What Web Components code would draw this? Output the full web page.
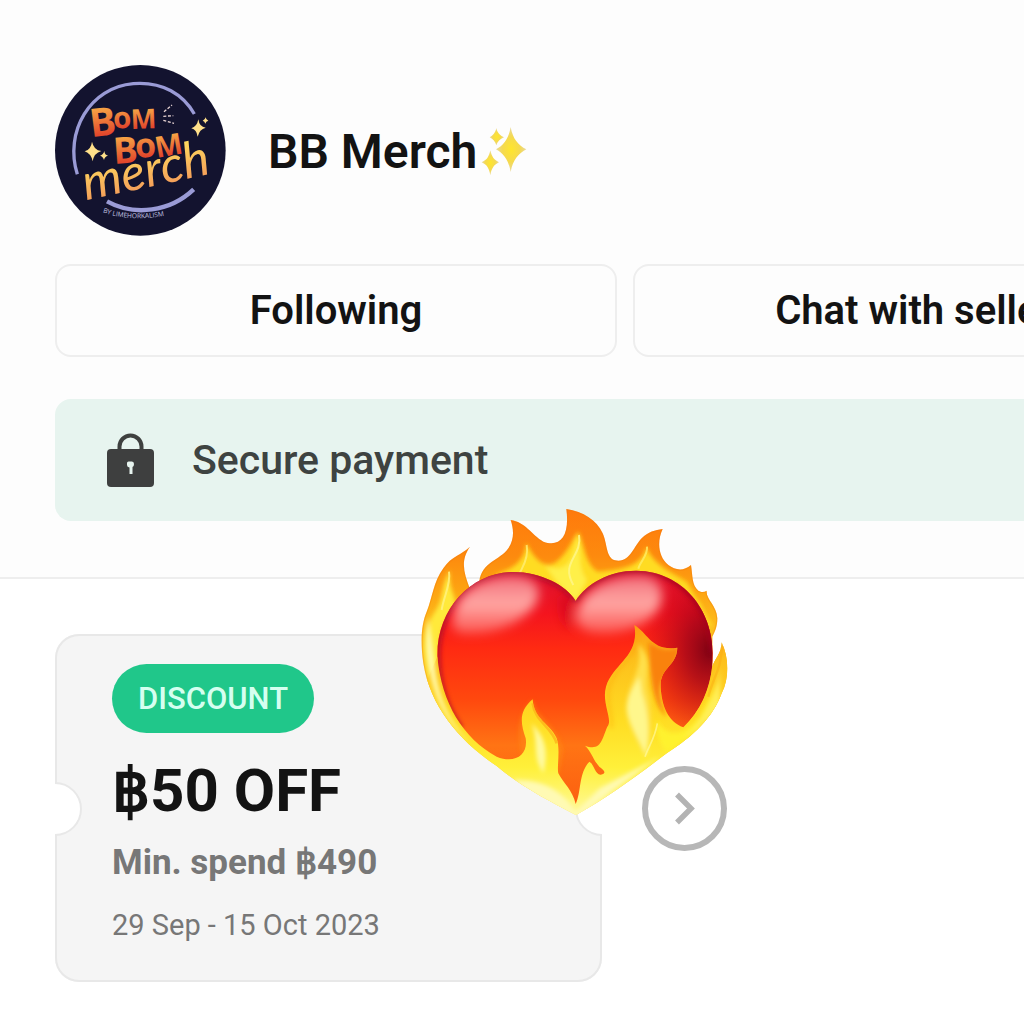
<!DOCTYPE html>
<html lang="en">
<head>
<meta charset="utf-8">
<meta name="viewport" content="width=device-width, initial-scale=1">
<title>BB Merch</title>
<style>
  body { margin: 0; background: #fff; font-family: Roboto, "Noto Sans", "Liberation Sans", sans-serif; color: #131313; }
</style>
</head>
<body>
<shop-page>
  <shop-header slot="header">BB Merch</shop-header>
  <shop-actions slot="header">
    <shop-button>Following</shop-button>
    <shop-button>Chat with seller</shop-button>
  </shop-actions>
  <secure-banner slot="header">Secure payment</secure-banner>
  <voucher-card>
    <span slot="tag">DISCOUNT</span>
    <span slot="title">฿50 OFF</span>
    <span slot="terms">Min. spend ฿490</span>
    <span slot="dates">29 Sep - 15 Oct 2023</span>
  </voucher-card>
  <next-button></next-button>
  <heart-sticker slot="sticker"></heart-sticker>
</shop-page>

<script>
function define(name, html) {
  const template = document.createElement('template');
  template.innerHTML = html;
  customElements.define(name, class extends HTMLElement {
    constructor() {
      super();
      this.attachShadow({ mode: 'open' }).append(template.content.cloneNode(true));
    }
  });
}

define('shop-page', `
<style>
  :host { display: block; position: relative; overflow: hidden; min-height: 100vh; }
  header { display: flex; flex-direction: column; padding: 65px 0 56px 55px; background: #fdfdfd; border-bottom: 2px solid #eee; }
  main { display: flex; align-items: center; gap: 40px; padding: 55px 0 42px 55px; }
</style>
<header><slot name="header"></slot></header>
<main><slot></slot></main>
<slot name="sticker"></slot>`);

define('shop-avatar', `
<style>
  :host { display: block; width: 171px; height: 171px; flex: none; }
  svg { display: block; width: 100%; height: 100%; }
  text { font-family: "Open Sans", Roboto, sans-serif; font-weight: 700; }
</style>
<svg viewBox="45 45 513 513" role="img" aria-label="Bom Bom Merch">
  <defs>
    <linearGradient id="b" x1="0" y1="0" x2="0" y2="1"><stop offset=".25" stop-color="#f6a545"/><stop offset=".75" stop-color="#e2482c"/></linearGradient>
    <linearGradient id="m" x1="0" y1="0" x2="0" y2="1"><stop offset=".1" stop-color="#ffe45e"/><stop offset=".8" stop-color="#f5a25a"/></linearGradient>
    <path id="curve" d="M188 487 Q275 518 385 495"/>
  </defs>
  <circle cx="301" cy="301" r="256" fill="#13132f"/>
  <g fill="none" stroke="#9a9bd6" stroke-width="10">
    <path d="M112 373 C72 245 150 112 280 101 C370 94 430 135 463 192"/>
    <path d="M201 454 C285 500 390 485 461 418" stroke-width="13"/>
  </g>
  <g fill="url(#b)">
    <text transform="translate(154 262) rotate(-7)" font-size="118">B</text>
    <text transform="translate(221 236) rotate(-4)" font-size="88">o</text>
    <text transform="translate(273 237) rotate(-2)" font-size="82">M</text>
    <text transform="translate(222 342) rotate(-4)" font-size="110">B</text>
    <text transform="translate(287 324) rotate(-4)" font-size="102">o</text>
    <text transform="translate(350 324) rotate(-10)" font-size="88">M</text>
  </g>
  <text transform="translate(138 451) rotate(-12)" font-size="150" fill="url(#m)" stroke="#13132f" stroke-width="4" paint-order="stroke" style="font-family:Lato,sans-serif;font-weight:400;font-style:italic">merch</text>
  <g fill="#ffe08a">
    <path d="M156 275 Q161 300 184 303 Q162 309 158 334 Q153 310 134 304 Q153 299 156 275Z"/>
    <path d="M193 303 Q194 315 204 317 Q194 319 192 330 Q189 319 180 317 Q190 314 193 303Z"/>
    <path d="M475 208 Q478 231 497 233 Q478 238 473 260 Q470 239 454 235 Q471 230 475 208Z"/>
    <path d="M497 202 Q498 210 505 212 Q498 214 496 221 Q494 214 488 212 Q495 210 497 202Z"/>
  </g>
  <g stroke="#e8d4d4" stroke-width="4" stroke-dasharray="9 5"><path d="M372 185 L396 165M370 199 L400 197M370 211 L402 220"/></g>
  <text font-size="20" fill="#c4c4e2" style="font-weight:500"><textPath href="#curve">BY LIMEHORKALISM</textPath></text>
</svg>`);

define('shop-header', `
<style>
  :host { display: flex; align-items: center; gap: 42px; }
  .name { display: flex; align-items: center; gap: 4px; }
  h1 { margin: 0; padding-top: 2px; font-size: 48px; line-height: 56px; font-weight: 600; white-space: nowrap; }
  svg { display: block; width: 46px; height: 50px; }
</style>
<shop-avatar></shop-avatar>
<div class="name">
  <h1><slot></slot></h1>
  <svg viewBox="694 52 138 150" aria-hidden="true">
    <defs><radialGradient id="s"><stop offset="0" stop-color="#ffe62b"/><stop offset=".55" stop-color="#f5da4e"/><stop offset="1" stop-color="#e8d89c"/></radialGradient></defs>
    <g fill="url(#s)">
      <path d="M783 55 C789 90 806 110 830 122 C806 135 789 155 783 190 C777 155 762 135 739 122 C762 110 777 90 783 55Z"/>
      <path d="M740 58 C743 73 751 80 763 86 C751 92 743 99 740 110 C737 99 730 92 720 86 C730 80 737 73 740 58Z"/>
      <path d="M722 125 C726 145 734 154 748 161 C734 168 726 177 722 200 C718 177 711 168 696 161 C711 154 718 145 722 125Z"/>
    </g>
  </svg>
</div>`);

define('shop-actions', `
<style>
  :host { display: grid; grid-auto-flow: column; grid-auto-columns: 58%; gap: 16px; margin-top: 28px; }
</style>
<slot></slot>`);

define('shop-button', `
<style>
  :host { display: block; }
  button { display: block; box-sizing: border-box; width: 100%; height: 93px; padding: 0 16px; border: 2px solid #eee; border-radius: 16px; background: #fdfdfd; color: inherit; font: 600 40px/48px Roboto, sans-serif; white-space: nowrap; cursor: pointer; }
</style>
<button type="button"><slot></slot></button>`);

define('secure-banner', `
<style>
  :host { display: flex; align-items: center; gap: 38px; margin-top: 42px; padding: 33px 52px; border-radius: 16px 0 0 16px; background: #e7f4ef; color: #3e4341; font-size: 41px; line-height: 56px; font-weight: 500; }
  svg { display: block; width: 47px; height: 56px; flex: none; }
  p { margin: 0; }
</style>
<svg viewBox="0 0 47 56" aria-hidden="true">
  <path d="M12.500 20V14.500a11 11 0 0 1 22 0V20" fill="none" stroke="#3e403f" stroke-width="4"/>
  <rect y="17" width="47" height="38" rx="4" fill="#3e3f3f"/>
  <path d="M20 31 Q20 29.500 21.500 29.500H25Q27 29.500 27 32Q27 34.500 25.500 35V42H22.500V35.500Q20 35 20 33Z" fill="#e7f4ef"/>
</svg>
<p><slot></slot></p>`);

define('voucher-card', `
<style>
  :host { display: block; flex: none; width: 547px; }
  article { position: relative; overflow: hidden; box-sizing: border-box; padding: 30px 57px 37px; border-radius: 24px; background: #f5f5f5; box-shadow: inset 0 0 0 2px #e8e8e8; }
  article::before, article::after { content: ""; position: absolute; top: 50%; width: 50px; height: 50px; margin-top: -26px; border: 2px solid #e8e8e8; border-radius: 50%; background: #fff; box-sizing: content-box; }
  article::before { left: -27px; }
  article::after { right: -27px; }
  .tag { display: flex; align-items: center; justify-content: center; width: 202px; height: 69px; border-radius: 35px; background: #20c78a; color: #d5fff0; font-size: 31px; line-height: 40px; font-weight: 500; }
  h2, p { margin: 0; white-space: nowrap; }
  h2 { margin-top: 22px; font-size: 60px; line-height: 72px; font-weight: 700; }
  p { color: #777; line-height: 40px; }
  .terms { margin-top: 16px; font-size: 35px; font-weight: 700; }
  .dates { margin-top: 22px; font-size: 29px; }
</style>
<article>
  <div class="tag"><slot name="tag"></slot></div>
  <h2><slot name="title"></slot></h2>
  <p class="terms"><slot name="terms"></slot></p>
  <p class="dates"><slot name="dates"></slot></p>
</article>`);

define('next-button', `
<style>
  :host { display: block; flex: none; }
  button { display: block; width: 85px; height: 85px; padding: 0; border: 6px solid #b7b7b7; border-radius: 50%; background: #fff; cursor: pointer; }
  svg { display: block; width: 73px; height: 73px; }
</style>
<button type="button" aria-label="Next voucher">
  <svg viewBox="0 0 73 73" aria-hidden="true"><path d="M29 22.500 43 36.500 29 50.500" fill="none" stroke="#b3b3b3" stroke-width="5.500"/></svg>
</button>`);

define('heart-sticker', `
<style>
  :host { display: block; position: absolute; left: 400px; top: 490px; width: 350px; height: 350px; pointer-events: none; }
  svg { display: block; width: 100%; height: 100%; }
</style>
<svg viewBox="0 0 1050 1050" role="img" aria-label="Heart on fire">
  <defs>
    <linearGradient id="flame" gradientUnits="userSpaceOnUse" x1="0" y1="60" x2="0" y2="975">
      <stop offset="0" stop-color="#ff7a0c"/><stop offset=".15" stop-color="#fd8a0e"/><stop offset=".27" stop-color="#fda512"/><stop offset=".45" stop-color="#fccb22"/><stop offset=".7" stop-color="#ffe62e"/><stop offset="1" stop-color="#fff78c"/>
    </linearGradient>
    <linearGradient id="heart" gradientUnits="userSpaceOnUse" x1="0" y1="245" x2="0" y2="940">
      <stop offset="0" stop-color="#dc1230"/><stop offset=".18" stop-color="#f4141e"/><stop offset=".33" stop-color="#ff2a12"/><stop offset=".55" stop-color="#ff480e"/><stop offset=".75" stop-color="#ff7414"/><stop offset="1" stop-color="#fc6010"/>
    </linearGradient>
    <linearGradient id="front" gradientUnits="userSpaceOnUse" x1="0" y1="405" x2="0" y2="975">
      <stop offset="0" stop-color="#fd9a12"/><stop offset=".18" stop-color="#fdc01c"/><stop offset=".5" stop-color="#ffdc22"/><stop offset=".75" stop-color="#fff03a"/><stop offset="1" stop-color="#fffa9c"/>
    </linearGradient>
    <radialGradient id="dark">
      <stop offset="0" stop-color="#780014" stop-opacity=".95"/><stop offset=".35" stop-color="#98001a" stop-opacity=".7"/><stop offset="1" stop-color="#c80018" stop-opacity="0"/>
    </radialGradient>
    <linearGradient id="shine" x1="0" y1="0" x2="0" y2="1"><stop offset="0" stop-color="#f47a84" stop-opacity=".9"/><stop offset=".5" stop-color="#ffa8a4"/><stop offset="1" stop-color="#ff8078" stop-opacity=".6"/></linearGradient>
    <filter id="b6" x="-30%" y="-30%" width="160%" height="160%"><feGaussianBlur stdDeviation="6"/></filter>
    <filter id="b16" x="-30%" y="-30%" width="160%" height="160%"><feGaussianBlur stdDeviation="16"/></filter>
    <path id="hp" d="M527 333 C560 280 630 241 710 242 C850 245 938 360 938 490 C938 600 900 660 850 715 C760 800 640 880 528 958 C430 890 330 830 250 780 C165 720 112 620 112 495 C112 350 220 246 340 246 C420 246 500 285 527 333Z"/>
    <path id="op" d="M528 975 C440 930 350 880 290 828 C180 755 90 650 70 520 C60 450 65 400 80 365 C97 325 100 275 130 235 C155 197 185 195 210 170 C178 215 195 255 208 292 L238 275 C245 215 300 212 325 175 C345 145 340 115 332 90 C375 95 395 135 430 155 C480 173 510 140 499 57 C550 65 590 90 608 130 C622 160 618 205 645 211 C690 220 700 170 725 145 C745 125 765 120 788 117 C770 155 775 200 805 225 C825 240 850 245 873 225 C878 255 875 285 895 302 C905 308 912 307 920 302 C918 330 950 345 952 385 C952 410 945 425 937 440 L937 530 C945 505 962 495 965 457 C985 500 990 560 965 610 C940 680 880 740 800 790 C720 850 620 925 528 975Z"/>
    <path id="fp" d="M112 500 C125 640 190 745 290 800 C345 822 385 795 377 745 C362 700 355 665 398 628 C402 690 450 700 470 745 C482 780 470 830 475 850 C490 880 518 900 527 942 C545 905 535 850 568 815 C582 822 586 855 602 854 C622 850 612 840 598 830 C578 808 575 785 555 767 C605 785 606 745 622 710 C640 690 604 640 618 590 C640 520 720 500 703 405 C745 430 755 485 832 473 C830 530 780 530 782 590 C785 650 805 695 850 712 C900 665 930 600 938 520 L1000 420 L1010 700 L528 1000 L50 750 L60 620Z"/>
    <clipPath id="oc"><use href="#op"/></clipPath>
    <clipPath id="hc"><use href="#hp"/></clipPath>
    <clipPath id="fc"><use href="#fp"/></clipPath>
  </defs>
  <use href="#op" fill="url(#flame)"/>
  <g clip-path="url(#oc)">
    <g filter="url(#b6)">
      <path d="M280 255 C330 240 375 220 378 158 C405 210 435 240 470 215 C510 180 515 150 535 125 C555 170 555 220 592 245 C660 240 730 230 738 170 C765 230 820 250 860 275 L940 410 L900 400 L830 280 L527 340 L430 270Z" fill="#ffdc20"/>
      <path d="M435 225 C500 260 530 200 530 130 C545 180 530 230 560 270 L527 335 L470 275Z" fill="#fff04a"/>
      <path d="M95 560 C60 470 80 400 105 365 C135 320 120 290 150 240 C145 300 165 310 168 350 C120 400 110 460 120 560Z" fill="#ffe93a"/>
      <path d="M893 315 C905 360 930 380 928 430 L905 360Z" fill="#ffd92a"/>
    </g>
    <path d="M380 165 C388 205 365 235 360 248" fill="none" stroke="#ffee75" stroke-width="6" opacity=".8"/>
    <path d="M537 135 C548 200 480 215 520 285" fill="none" stroke="#fff68c" stroke-width="6" opacity=".8"/>
    <path d="M741 170 C745 195 720 215 715 236" fill="none" stroke="#ffee65" stroke-width="6" opacity=".8"/>
    <path d="M147 245 C153 285 132 315 125 360" fill="none" stroke="#fff284" stroke-width="6" opacity=".8"/>
    <use href="#op" fill="none" stroke="#f2780a" stroke-width="7" stroke-opacity=".3"/>
  </g>
  <use href="#hp" fill="url(#heart)"/>
  <g clip-path="url(#hc)">
    <ellipse cx="930" cy="480" rx="210" ry="280" fill="url(#dark)"/>
    <path d="M527 333 C500 285 420 246 340 246 C220 246 112 350 112 495 C112 590 140 660 180 715" fill="none" stroke="#b00b2a" stroke-width="22" opacity=".75" filter="url(#b6)"/>
    <path d="M527 333 C560 280 630 241 710 242 C850 245 938 360 938 490" fill="none" stroke="#a3001e" stroke-width="20" opacity=".7" filter="url(#b6)"/>
    <g filter="url(#b16)">
      <path d="M500 300 Q535 350 505 420 Q480 390 480 330Z" fill="#c80a20" opacity=".6"/>
      <path d="M158 400 C160 310 240 258 340 258 C420 260 430 310 400 350 C350 410 260 440 180 428 C165 424 158 415 158 400Z" fill="url(#shine)"/>
      <path d="M528 380 C545 290 640 255 730 258 C790 264 800 325 765 370 C725 415 640 440 570 425 C540 415 528 400 528 380Z" fill="url(#shine)"/>
    </g>
    <path d="M365 800 C345 700 365 660 398 628 C410 690 470 700 490 780 L475 860Z" fill="#ff8a12" opacity=".55" filter="url(#b6)"/>
  </g>
  <g clip-path="url(#oc)">
    <use href="#fp" fill="url(#front)"/>
    <g filter="url(#b6)">
      <path d="M85 380 C72 460 82 520 92 560 C110 640 150 710 215 765 C150 700 112 620 104 520 C98 470 92 430 85 380Z" fill="#fff9a8"/>
    </g>
    <g clip-path="url(#fc)">
      <path d="M745 455 C800 490 820 475 840 468 L820 550 C780 560 765 600 800 680 C760 650 750 560 745 455Z" fill="#f98210" filter="url(#b6)"/>
      <g filter="url(#b6)">
        <path d="M712 460 C735 530 690 570 682 630 C672 700 710 740 735 800 C760 740 755 650 742 600 C735 540 760 510 712 460Z" fill="#ffe04c"/>
        <path d="M718 560 C690 610 668 640 688 690 C702 730 722 760 738 800 C752 720 740 650 725 610Z" fill="#fff78c"/>
        <path d="M395 700 C430 740 448 770 430 850 C395 800 418 760 395 700Z" fill="#fffaa0"/>
        <path d="M770 690 C800 740 840 750 900 680 L950 580 L900 720 L800 790 C780 760 770 740 770 690Z" fill="#fff22e"/>
        <path d="M340 870 C400 870 450 880 500 930 L528 965 L600 895 L780 800 L640 900 L528 985 L380 910Z" fill="#fffab4"/>
        <path d="M960 500 C965 590 920 680 840 760 L960 660Z" fill="#ffef58"/>
      </g>
      <path d="M700 412 C735 500 640 520 626 600 C620 650 640 680 634 715" fill="none" stroke="#fd9d10" stroke-width="8" opacity=".4" filter="url(#b6)"/>
      <path d="M398 640 C405 695 455 710 470 760" fill="none" stroke="#fcae18" stroke-width="8" opacity=".7"/>
      <path d="M735 800 C745 770 765 745 772 700" fill="none" stroke="#fffcae" stroke-width="5" opacity=".6"/>
      <path d="M965 465 C968 530 940 560 925 620" fill="none" stroke="#fba812" stroke-width="7" opacity=".4"/>
    </g>
  </g>
</svg>`);
</script>
</body>
</html>
